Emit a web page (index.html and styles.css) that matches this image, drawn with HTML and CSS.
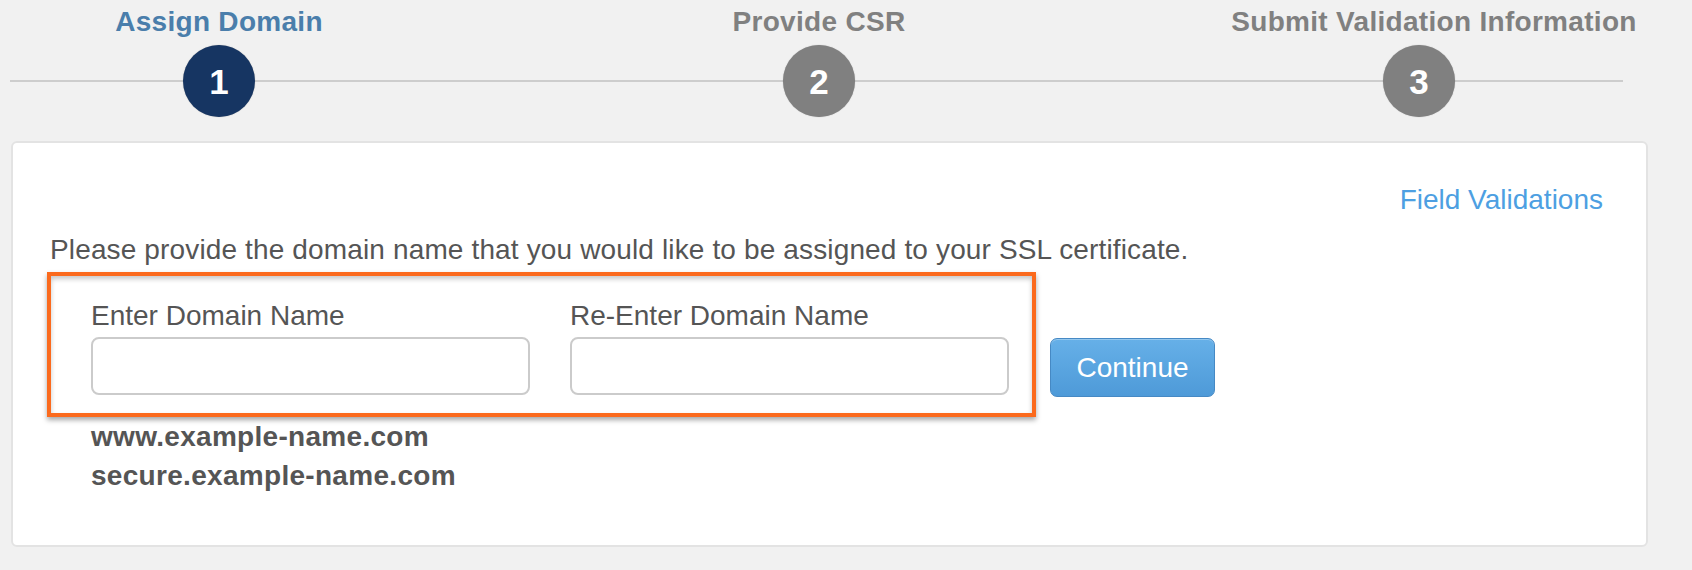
FILE: index.html
```html
<!DOCTYPE html>
<html lang="en">
<head>
<meta charset="utf-8">
<title>Assign Domain</title>
<link rel="stylesheet" href="styles.css">
</head>
<body>
<div class="page">
  <div class="steps">
    <div class="step active">
      <div class="step-label">Assign Domain</div>
      <div class="step-num">1</div>
    </div>
    <div class="step">
      <div class="step-label">Provide CSR</div>
      <div class="step-num">2</div>
    </div>
    <div class="step step-last">
      <div class="step-label">Submit Validation Information</div>
      <div class="step-num">3</div>
    </div>
  </div>

  <div class="card">
    <div class="card-top">
      <a class="field-link" href="#">Field Validations</a>
    </div>
    <p class="intro">Please provide the domain name that you would like to be assigned to your SSL certificate.</p>
    <div class="form-row">
      <div class="highlight">
        <div class="field">
          <label class="field-label">Enter Domain Name</label>
          <input class="field-input" type="text">
        </div>
        <div class="field">
          <label class="field-label">Re-Enter Domain Name</label>
          <input class="field-input" type="text">
        </div>
      </div>
      <button class="btn" type="button">Continue</button>
    </div>
    <div class="examples">
      <div>www.example-name.com</div>
      <div>secure.example-name.com</div>
    </div>
  </div>
</div>
</body>
</html>
```

FILE: styles.css
```css
html, body {
  margin: 0;
  padding: 0;
  background: #f1f1f1;
  font-family: "Liberation Sans", Arial, Helvetica, sans-serif;
}

body {
  width: 1692px;
  height: 570px;
  overflow: hidden;
}

.steps {
  position: relative;
  display: flex;
  gap: 420px;
  padding: 6px 0 0 129px;
  height: 111px;
}

.steps::before {
  content: "";
  position: absolute;
  left: 10px;
  top: 80px;
  width: 1613px;
  height: 2px;
  background: #cdcdcd;
}

.step {
  position: relative;
  z-index: 1;
  width: 180px;
  display: flex;
  flex-direction: column;
  align-items: center;
}

.step-label {
  font-size: 28px;
  font-weight: bold;
  line-height: 32px;
  letter-spacing: 0.3px;
  white-space: nowrap;
  color: #808080;
  margin-bottom: 7px;
}

.step.active .step-label {
  color: #4a7eab;
}

.step-last .step-label {
  margin-left: 30px;
}

.step-num {
  width: 72px;
  height: 72px;
  border-radius: 50%;
  background: #808080;
  color: #fff;
  font-size: 35px;
  font-weight: bold;
  line-height: 1;
  display: flex;
  align-items: center;
  justify-content: center;
  box-shadow: 0 0 1px rgba(0, 0, 0, 0.35);
}

.step.active .step-num {
  background: #163562;
}

.card {
  box-sizing: border-box;
  width: 1637px;
  height: 406px;
  margin: 24px 0 0 11px;
  padding: 41px 43px 0 36px;
  background: #fff;
  border: 2px solid #e3e3e3;
  border-radius: 6px;
}

.card-top {
  display: flex;
  justify-content: flex-end;
  font-size: 28px;
  line-height: 32px;
}

.field-link {
  color: #4d9fe2;
  text-decoration: none;
}

.intro {
  margin: 18px 0 0 1px;
  font-size: 28px;
  line-height: 32px;
  letter-spacing: 0.14px;
  color: #555;
}

.form-row {
  display: flex;
  align-items: flex-start;
  margin-top: 6px;
}

.highlight {
  display: flex;
  gap: 40px;
  margin-left: -2px;
  padding: 24px 23px 18px 40px;
  border: 4px solid #fb6a1d;
  box-shadow: 0 3px 5px rgba(0, 0, 0, 0.35), inset 0 3px 5px rgba(0, 0, 0, 0.22);
}

.field {
  width: 439px;
  display: flex;
  flex-direction: column;
}

.field-label {
  font-size: 28px;
  line-height: 32px;
  color: #555;
}

.field-input {
  box-sizing: border-box;
  display: block;
  width: 100%;
  height: 58px;
  margin: 5px 0 0;
  padding: 0 12px;
  border: 2px solid #cbcbcb;
  border-radius: 8px;
  background: #fff;
  font-size: 28px;
  outline: none;
}

.btn {
  box-sizing: border-box;
  width: 165px;
  height: 59px;
  margin: 66px 0 0 14px;
  padding: 0;
  border: 1px solid #4689c4;
  border-radius: 7px;
  background: linear-gradient(#66b0e8, #4e9ad8);
  box-shadow: inset 0 1px 0 rgba(255, 255, 255, 0.3);
  color: #fff;
  font-family: "Liberation Sans", Arial, Helvetica, sans-serif;
  font-size: 28px;
  line-height: 1;
}

.examples {
  padding-left: 42px;
  font-size: 28px;
  font-weight: bold;
  line-height: 39px;
  letter-spacing: 0.3px;
  color: #555;
}
```
